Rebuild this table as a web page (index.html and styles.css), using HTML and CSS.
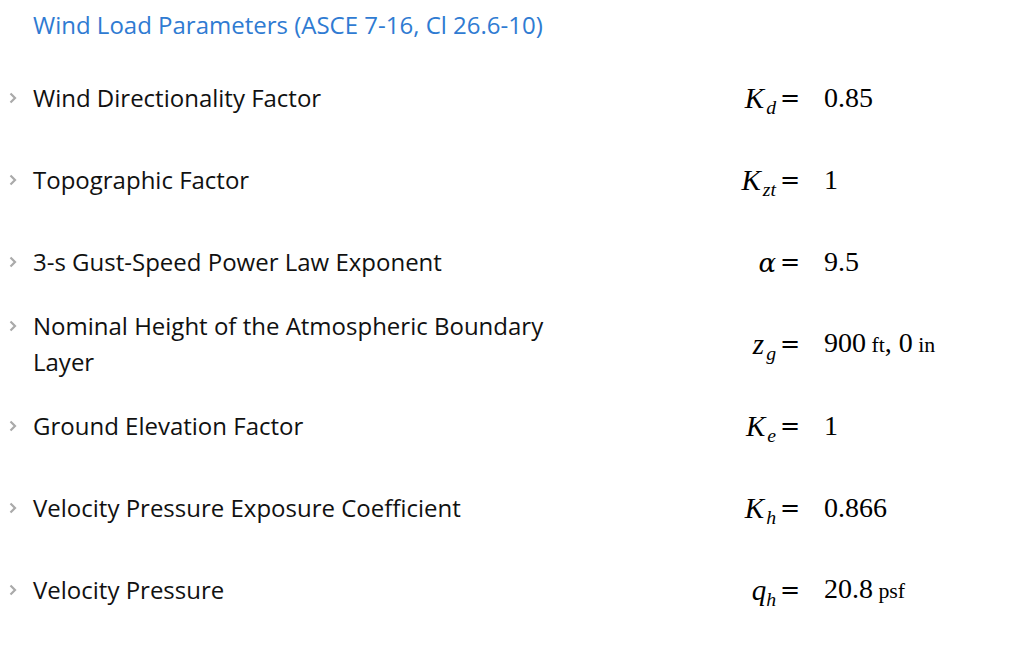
FILE: index.html
```html
<!DOCTYPE html>
<html>
<head>
<meta charset="utf-8">
<link rel="stylesheet" href="styles.css">
</head>
<body>
<div class="panel">
  <div class="title">Wind Load Parameters (ASCE 7-16, Cl 26.6-10)</div>
  <div class="list">
    <div class="row">
      <div class="head">
        <span class="chev"><svg width="8" height="12" viewBox="0 0 8 12"><polyline points="1.5,1.5 6,6 1.5,10.5" fill="none" stroke="#aaaaaa" stroke-width="2.2"/></svg></span>
        <div class="label">Wind Directionality Factor</div>
      </div>
      <div class="lhs"><i>K</i><sub><i>d</i></sub></div>
      <div class="eq">=</div>
      <div class="val">0.85</div>
    </div>
    <div class="row">
      <div class="head">
        <span class="chev"><svg width="8" height="12" viewBox="0 0 8 12"><polyline points="1.5,1.5 6,6 1.5,10.5" fill="none" stroke="#aaaaaa" stroke-width="2.2"/></svg></span>
        <div class="label">Topographic Factor</div>
      </div>
      <div class="lhs"><i>K</i><sub><i>zt</i></sub></div>
      <div class="eq">=</div>
      <div class="val">1</div>
    </div>
    <div class="row">
      <div class="head">
        <span class="chev"><svg width="8" height="12" viewBox="0 0 8 12"><polyline points="1.5,1.5 6,6 1.5,10.5" fill="none" stroke="#aaaaaa" stroke-width="2.2"/></svg></span>
        <div class="label">3-s Gust-Speed Power Law Exponent</div>
      </div>
      <div class="lhs"><i class="greek">α</i></div>
      <div class="eq">=</div>
      <div class="val">9.5</div>
    </div>
    <div class="row">
      <div class="head">
        <span class="chev"><svg width="8" height="12" viewBox="0 0 8 12"><polyline points="1.5,1.5 6,6 1.5,10.5" fill="none" stroke="#aaaaaa" stroke-width="2.2"/></svg></span>
        <div class="label">Nominal Height of the Atmospheric Boundary Layer</div>
      </div>
      <div class="lhs"><i>z</i><sub><i>g</i></sub></div>
      <div class="eq">=</div>
      <div class="val">900<span class="unit"> ft</span>, 0<span class="unit"> in</span></div>
    </div>
    <div class="row">
      <div class="head">
        <span class="chev"><svg width="8" height="12" viewBox="0 0 8 12"><polyline points="1.5,1.5 6,6 1.5,10.5" fill="none" stroke="#aaaaaa" stroke-width="2.2"/></svg></span>
        <div class="label">Ground Elevation Factor</div>
      </div>
      <div class="lhs"><i>K</i><sub><i>e</i></sub></div>
      <div class="eq">=</div>
      <div class="val">1</div>
    </div>
    <div class="row">
      <div class="head">
        <span class="chev"><svg width="8" height="12" viewBox="0 0 8 12"><polyline points="1.5,1.5 6,6 1.5,10.5" fill="none" stroke="#aaaaaa" stroke-width="2.2"/></svg></span>
        <div class="label">Velocity Pressure Exposure Coefficient</div>
      </div>
      <div class="lhs"><i>K</i><sub><i>h</i></sub></div>
      <div class="eq">=</div>
      <div class="val">0.866</div>
    </div>
    <div class="row">
      <div class="head">
        <span class="chev"><svg width="8" height="12" viewBox="0 0 8 12"><polyline points="1.5,1.5 6,6 1.5,10.5" fill="none" stroke="#aaaaaa" stroke-width="2.2"/></svg></span>
        <div class="label">Velocity Pressure</div>
      </div>
      <div class="lhs"><i>q</i><sub class="tight"><i>h</i></sub></div>
      <div class="eq">=</div>
      <div class="val">20.8<span class="unit"> psf</span></div>
    </div>
  </div>
</div>
</body>
</html>
```

FILE: styles.css
```css
html, body {
  margin: 0;
  padding: 0;
  background: #ffffff;
}

body {
  font-family: "Open Sans", "Liberation Sans", sans-serif;
  color: #111111;
}

.panel {
  width: 1014px;
}

.title {
  height: 50px;
  line-height: 50px;
  padding-left: 33px;
  margin-bottom: 7px;
  font-size: 24px;
  color: #2f7bd2;
}

.row {
  display: grid;
  grid-template-columns: 578px 199px 47px 1fr;
  align-items: center;
  height: 82px;
}

.head {
  display: flex;
  align-items: flex-start;
}

.chev {
  flex: 0 0 33px;
  height: 36px;
  display: flex;
  align-items: center;
  padding-left: 9px;
  box-sizing: border-box;
}

.chev svg {
  display: block;
}

.label {
  width: 545px;
  font-size: 24px;
  line-height: 36px;
  color: #111111;
}

.lhs, .eq, .val {
  font-family: "Liberation Serif", "DejaVu Serif", serif;
  font-size: 28px;
  line-height: 36px;
  color: #000000;
  white-space: nowrap;
}

.lhs {
  font-size: 29px;
  text-align: right;
  padding-right: 1px;
}

.lhs i {
  font-style: italic;
}

.lhs i.greek {
  font-family: "DejaVu Serif", "Liberation Serif", serif;
  font-size: 26px;
}

.lhs sub {
  font-size: 0.68em;
  vertical-align: -0.3em;
  line-height: 0;
  margin-left: 2px;
}

.lhs sub.tight {
  margin-left: 0;
}

.eq {
  font-family: "DejaVu Serif", "Liberation Serif", serif;
  font-size: 24px;
  padding-left: 3px;
}

.unit {
  font-size: 0.78em;
}
```
